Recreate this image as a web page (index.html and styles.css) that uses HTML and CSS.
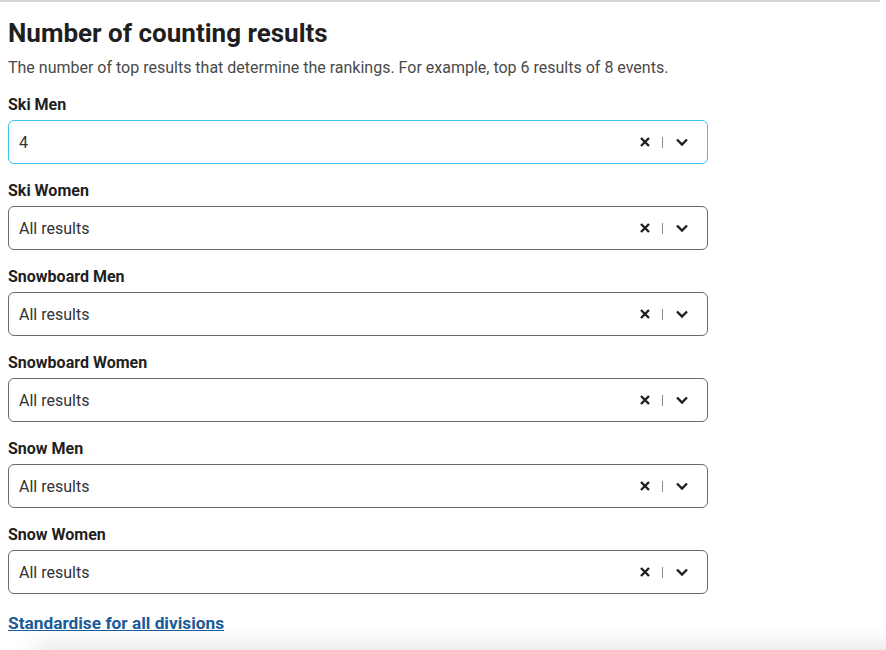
FILE: index.html
```html
<!DOCTYPE html>
<html lang="en">
<head>
  <meta charset="UTF-8">
  <title>Counting results</title>
  <link rel="stylesheet" href="styles.css">
</head>
<body>
<div class="settings-section">
  <h2>Number of counting results</h2>
  <p class="hint">The number of top results that determine the rankings. For example, top 6 results of 8 events.</p>

  <div class="field">
    <label>Ski Men</label>
    <div class="select-box focused">
      <span class="value">4</span>
      <span class="controls">
        <svg class="clear-icon" viewBox="0 0 12 12"><path d="M2 2 L10 10 M10 2 L2 10"/></svg>
        <span class="sep"></span>
        <svg class="chevron-icon" viewBox="0 0 14 10"><path d="M2 2.5 L7 7.5 L12 2.5"/></svg>
      </span>
    </div>
  </div>

  <div class="field">
    <label>Ski Women</label>
    <div class="select-box">
      <span class="value">All results</span>
      <span class="controls">
        <svg class="clear-icon" viewBox="0 0 12 12"><path d="M2 2 L10 10 M10 2 L2 10"/></svg>
        <span class="sep"></span>
        <svg class="chevron-icon" viewBox="0 0 14 10"><path d="M2 2.5 L7 7.5 L12 2.5"/></svg>
      </span>
    </div>
  </div>

  <div class="field">
    <label>Snowboard Men</label>
    <div class="select-box">
      <span class="value">All results</span>
      <span class="controls">
        <svg class="clear-icon" viewBox="0 0 12 12"><path d="M2 2 L10 10 M10 2 L2 10"/></svg>
        <span class="sep"></span>
        <svg class="chevron-icon" viewBox="0 0 14 10"><path d="M2 2.5 L7 7.5 L12 2.5"/></svg>
      </span>
    </div>
  </div>

  <div class="field">
    <label>Snowboard Women</label>
    <div class="select-box">
      <span class="value">All results</span>
      <span class="controls">
        <svg class="clear-icon" viewBox="0 0 12 12"><path d="M2 2 L10 10 M10 2 L2 10"/></svg>
        <span class="sep"></span>
        <svg class="chevron-icon" viewBox="0 0 14 10"><path d="M2 2.5 L7 7.5 L12 2.5"/></svg>
      </span>
    </div>
  </div>

  <div class="field">
    <label>Snow Men</label>
    <div class="select-box">
      <span class="value">All results</span>
      <span class="controls">
        <svg class="clear-icon" viewBox="0 0 12 12"><path d="M2 2 L10 10 M10 2 L2 10"/></svg>
        <span class="sep"></span>
        <svg class="chevron-icon" viewBox="0 0 14 10"><path d="M2 2.5 L7 7.5 L12 2.5"/></svg>
      </span>
    </div>
  </div>

  <div class="field">
    <label>Snow Women</label>
    <div class="select-box">
      <span class="value">All results</span>
      <span class="controls">
        <svg class="clear-icon" viewBox="0 0 12 12"><path d="M2 2 L10 10 M10 2 L2 10"/></svg>
        <span class="sep"></span>
        <svg class="chevron-icon" viewBox="0 0 14 10"><path d="M2 2.5 L7 7.5 L12 2.5"/></svg>
      </span>
    </div>
  </div>

  <a class="standardise-link" href="#">Standardise for all divisions</a>
</div>
<div class="footer-shadow"></div>
</body>
</html>
```

FILE: styles.css
```css
body {
  font-family: Roboto, "Liberation Sans", Arial, sans-serif;
  background-color: white;
  color: #1f1f1f;
  margin: 0;
  padding: 0;
  overflow: hidden;
}

.settings-section {
  border-top: 2px solid #d4d4d4;
  margin-right: 6px;
  padding: 16px 8px 0 8px;
}

h2 {
  font-size: 26px;
  font-weight: 700;
  margin: 0;
  line-height: 30px;
  color: #1f1f1f;
}

.hint {
  font-size: 16px;
  color: #4a4a4a;
  margin: 10px 0 0 0;
  line-height: 20px;
}

.field {
  margin-top: 18px;
  width: 700px;
}

label {
  display: block;
  font-size: 16px;
  font-weight: 700;
  line-height: 18px;
  margin-bottom: 6px;
  color: #1f1f1f;
}

.select-box {
  display: flex;
  align-items: center;
  justify-content: space-between;
  height: 44px;
  box-sizing: border-box;
  border: 1px solid #6b6b6b;
  border-radius: 6px;
  padding: 0 18px 0 10px;
  font-size: 16px;
  color: #333;
}

.select-box.focused {
  border-color: #3cc3ef;
}

.controls {
  display: flex;
  align-items: center;
}

.clear-icon {
  width: 12px;
  height: 12px;
  fill: none;
  stroke: #1f1f1f;
  stroke-width: 2.4;
}

.sep {
  width: 1px;
  height: 11px;
  background-color: #8a8a8a;
  margin: 0 12px 0 11px;
}

.chevron-icon {
  width: 14px;
  height: 10px;
  fill: none;
  stroke: #1f1f1f;
  stroke-width: 2.4;
}

.standardise-link {
  display: inline-block;
  margin-top: 20px;
  font-size: 17.3px;
  line-height: 19px;
  font-weight: 700;
  color: #1b5c98;
  text-decoration: underline;
}

.footer-shadow {
  position: fixed;
  left: 40px;
  right: -40px;
  bottom: -20px;
  height: 20px;
  box-shadow: 0 0 24px 4px rgba(0, 0, 0, 0.12);
}
```
